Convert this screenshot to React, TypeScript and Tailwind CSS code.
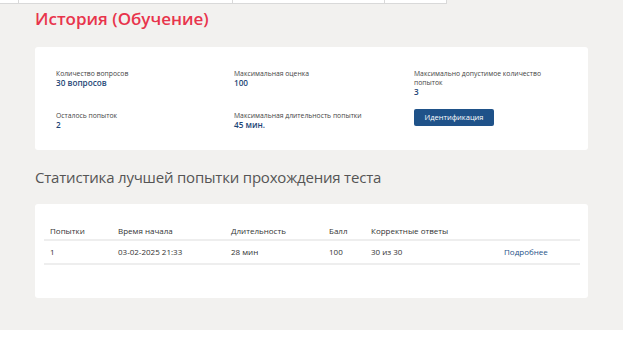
import React from "react";

const font = { fontFamily: '"Open Sans", "Noto Sans", Arial, sans-serif' };

function Info({ label, value }: { label: React.ReactNode; value: string }) {
  return (
    <div className="flex flex-col">
      <div className="text-[6.8px] leading-[9px] text-[#444]">{label}</div>
      <div className="text-[8.2px] leading-[10px] font-semibold text-[#1d4576]">{value}</div>
    </div>
  );
}

export default function App() {
  return (
    <div className="w-[623px] h-[338px] bg-white overflow-hidden" style={font}>
      <div className="flex h-[4px]">
        <div className="w-[19px] border-r border-b border-[#d9d9d9] bg-white" />
        <div className="w-[214px] border-r border-b border-[#d9d9d9] bg-white" />
        <div className="w-[152px] border-r border-b border-[#d9d9d9] bg-white" />
        <div className="w-[62px] border-r border-b border-[#d9d9d9] bg-white" />
        <div className="flex-1 bg-[#f2f1ef]" />
      </div>
      <div className="h-[326px] bg-[#f2f1ef] pl-[35px] pr-[35px]">
        <h1 className="pt-[4px] h-[43px] text-[17px] leading-[22px] font-semibold text-[#e8344c]">
          История (Обучение)
        </h1>
        <div className="h-[103px] bg-white rounded-[3px] pt-[22px] pl-[21px] grid grid-cols-[178px_180px_1fr] gap-y-[14px] content-start">
          <Info label="Количество вопросов" value="30 вопросов" />
          <Info label="Максимальная оценка" value="100" />
          <Info
            label={
              <>
                Максимально допустимое количество
                <br />
                попыток
              </>
            }
            value="3"
          />
          <Info label="Осталось попыток" value="2" />
          <Info label="Максимальная длительность попытки" value="45 мин." />
          <div className="-mt-[9px]">
            <button className="h-[17px] w-[80px] rounded-[2px] bg-[#1f5289] text-white text-[7.5px] font-medium">
              Идентификация
            </button>
          </div>
        </div>
        <div className="h-[54px] flex items-center text-[15px] text-[#555] tracking-[-0.2px]">
          Статистика лучшей попытки прохождения теста
        </div>
        <div className="h-[94px] bg-white rounded-[3px] px-[9px] pt-[19px]">
          <table className="w-[536px] table-fixed text-[8px] text-[#333] border-collapse">
            <colgroup>
              <col className="w-[74px]" />
              <col className="w-[113px]" />
              <col className="w-[98px]" />
              <col className="w-[42px]" />
              <col className="w-[133px]" />
              <col />
            </colgroup>
            <thead>
              <tr className="h-[17px] border-b-2 border-[#eeeeee] text-left">
                <th className="font-medium pl-[6px]">Попытки</th>
                <th className="font-medium">Время начала</th>
                <th className="font-medium">Длительность</th>
                <th className="font-medium">Балл</th>
                <th className="font-medium">Корректные ответы</th>
                <th></th>
              </tr>
            </thead>
            <tbody>
              <tr className="h-[24px] border-b-2 border-[#eeeeee]">
                <td className="pl-[6px]">1</td>
                <td>03-02-2025 21:33</td>
                <td>28 мин</td>
                <td>100</td>
                <td>30 из 30</td>
                <td className="text-[#1f5289]">Подробнее</td>
              </tr>
            </tbody>
          </table>
        </div>
      </div>
    </div>
  );
}
